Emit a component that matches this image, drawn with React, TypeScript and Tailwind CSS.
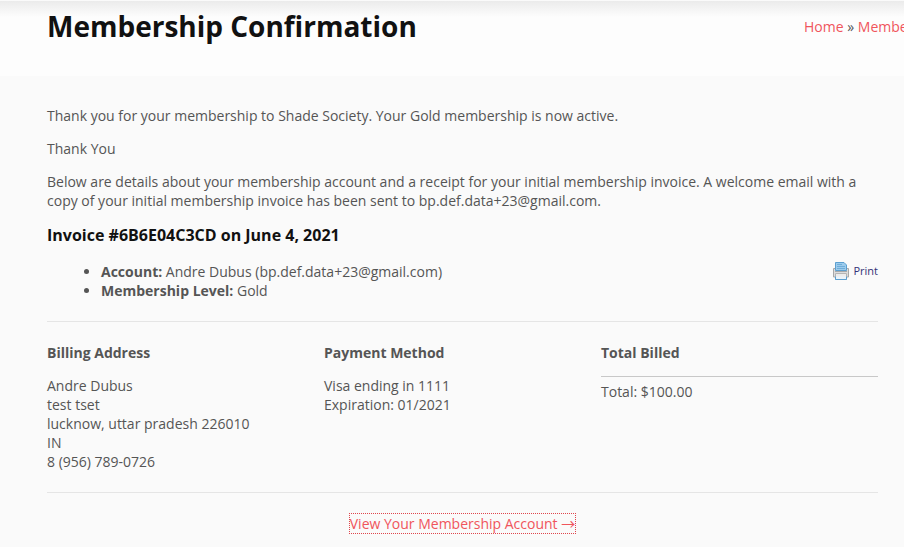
import React from 'react';

interface InvoiceColumnProps {
  title: string;
  children: React.ReactNode;
}

const billingAddress = ['Andre Dubus', 'test tset', 'lucknow, uttar pradesh 226010', 'IN', '8 (956) 789-0726'];

const PrinterIcon: React.FC = () => (
  <svg width="16" height="18" viewBox="0 0 16 18" aria-hidden="true">
    <path d="M.5 6.5h15V15H.5z" fill="#dcdcdc" stroke="#a8a8a8" />
    <path d="M2.5 8.500v-8h8.500l2.500 2.500v5.500z" fill="#9ccbec" stroke="#5b9fd0" />
    <path d="M4 2.500h5M4 4.500h8M4 6.500h8" stroke="#6fadd9" />
    <path d="M2 9.500h12" stroke="#a8a8a8" />
    <path d="M2.500 11.500h11v6h-11z" fill="#ececec" stroke="#b4b4b4" />
    <path d="M2.500 14.500v3h11v-3" fill="#eaf3fa" stroke="#5b9fd0" />
  </svg>
);

const InvoiceColumn: React.FC<InvoiceColumnProps> = ({ title, children }) => (
  <div>
    <strong className="block mb-3.5">{title}</strong>
    {children}
  </div>
);

export default function App() {
  return (
    <div className="min-h-screen overflow-hidden bg-[#fafafa] font-['Open_Sans',sans-serif] text-sm leading-[19px] text-[#555]">
      <header className="mt-px flex h-[75px] items-start justify-between bg-[#fdfdfd] bg-linear-to-b from-[#ebebeb] to-[#fdfdfd] to-[16px] pl-[47px]">
        <h1 className="pt-[5px] text-[28px] leading-10 font-bold text-[#111]">Membership Confirmation</h1>
        <nav aria-label="Breadcrumb" className="w-[100px] shrink-0 overflow-hidden pt-4 whitespace-nowrap">
          <a href="#home" className="text-[#f0555c]">Home</a> »{' '}
          <a href="#membership" className="text-[#f0555c]">Membership</a>
        </nav>
      </header>

      <main className="pt-[30px] pr-[26px] pb-3 pl-[47px]">
        <div className="space-y-3.5">
          <p>Thank you for your membership to Shade Society. Your Gold membership is now active.</p>
          <p>Thank You</p>
          <p>
            Below are details about your membership account and a receipt for your initial membership invoice. A welcome email with a
            copy of your initial membership invoice has been sent to bp.def.data+23@gmail.com.
          </p>
        </div>

        <h3 className="mt-[13px] mb-3.5 text-base leading-6 font-bold text-[#111]">Invoice #6B6E04C3CD on June 4, 2021</h3>

        <div className="flex items-start justify-between">
          <ul className="list-disc pt-px pl-[54px]">
            <li><strong>Account:</strong> Andre Dubus (bp.def.data+23@gmail.com)</li>
            <li><strong>Membership Level:</strong> Gold</li>
          </ul>
          <button type="button" className="flex items-center gap-1 text-[11px] text-[#333377]">
            <PrinterIcon />
            Print
          </button>
        </div>

        <hr className="my-[21px] border-[#e5e5e5]" />

        <div className="grid grid-cols-3">
          <InvoiceColumn title="Billing Address">
            {billingAddress.map((line) => (
              <p key={line}>{line}</p>
            ))}
          </InvoiceColumn>
          <InvoiceColumn title="Payment Method">
            <p>Visa ending in 1111</p>
            <p>Expiration: 01/2021</p>
          </InvoiceColumn>
          <InvoiceColumn title="Total Billed">
            <p className="border-t border-[#c8c8c8] pt-[5px]">Total: $100.00</p>
          </InvoiceColumn>
        </div>

        <hr className="my-[21px] border-[#e5e5e5]" />

        <div className="text-center">
          <a href="#account" className="inline-block text-[#f0555c] outline-1 outline-dotted outline-[#e0454c]">
            View Your Membership Account <span className="font-['Noto_Sans_CJK_SC',sans-serif] leading-none">→</span>
          </a>
        </div>
      </main>
    </div>
  );
}
